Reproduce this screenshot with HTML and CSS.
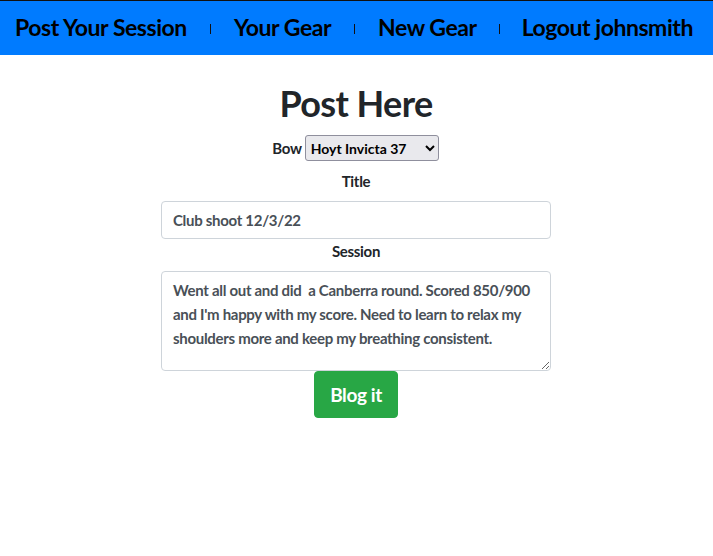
FILE: index.html
```html
<!DOCTYPE html>
<html>
<head>
<meta charset="utf-8">
<link rel="stylesheet" href="styles.css">
</head>
<body>
<nav class="navbar">
  <a class="nav-link" href="#">Post Your Session</a>
  <span class="sep"></span>
  <a class="nav-link" href="#">Your Gear</a>
  <span class="sep"></span>
  <a class="nav-link" href="#">New Gear</a>
  <span class="sep"></span>
  <a class="nav-link" href="#">Logout johnsmith</a>
</nav>
<main class="main">
  <h1 class="title">Post Here</h1>
  <form class="form">
    <div class="bow-row">
      <label class="label">Bow</label>
      <select class="select"><option>Hoyt Invicta 37</option></select>
    </div>
    <label class="label block first">Title</label>
    <input class="control input" type="text" value="Club shoot 12/3/22">
    <label class="label block">Session</label>
    <textarea class="control textarea">Went all out and did  a Canberra round. Scored 850/900 and I'm happy with my score. Need to learn to relax my shoulders more and keep my breathing consistent.</textarea>
    <button class="btn" type="button">Blog it</button>
  </form>
</main>
</body>
</html>
```

FILE: styles.css
```css
* { box-sizing: border-box; }
body {
  margin: 0;
  font-family: Lato, "Liberation Sans", sans-serif;
  font-weight: 700;
  color: #212529;
  background: #fff;
}
.navbar {
  display: flex;
  align-items: center;
  height: 55px;
  background: #007bff;
  border-top: 1px solid #111;
  padding: 0 0 2px 15px;
  white-space: nowrap;
  overflow: hidden;
}
.nav-link {
  flex-shrink: 0;
  color: #000;
  text-decoration: none;
  font-size: 23px;
  letter-spacing: -0.45px;
}
.sep {
  flex-shrink: 0;
  width: 1px;
  height: 10px;
  background: #111;
  margin: 4px 23px 0;
}
.sep:last-of-type { margin-left: 22px; margin-right: 22px; }
.main {
  display: flex;
  flex-direction: column;
  align-items: center;
  padding-right: 1px;
}
.title {
  margin: 26px 0 10px;
  font-size: 36px;
  line-height: 44px;
  letter-spacing: -0.6px;
}
.form {
  width: 390px;
  display: flex;
  flex-direction: column;
  align-items: center;
}
.bow-row {
  display: flex;
  align-items: center;
  gap: 3px;
  margin-left: -1px;
}
.label {
  font-size: 15px;
  line-height: 24px;
  letter-spacing: -0.3px;
}
.block { margin: 0 0 8px; }
.block.first { margin-top: 8px; }
.select {
  font-family: inherit;
  font-weight: 700;
  font-size: 14px;
  height: 26px;
  width: 134px;
  color: #000;
  background: #e9e9ed;
  border: 1px solid #8f8f9d;
  border-radius: 3px;
  padding: 2px 2px 2px 1px;
}
.control {
  width: 100%;
  font-family: inherit;
  font-weight: 700;
  font-size: 15px;
  color: #495057;
  border: 1px solid #ced4da;
  border-radius: 4px;
  padding: 6px 11px;
  letter-spacing: -0.3px;
  margin: 0;
}
.input { height: 38px; }
.textarea {
  display: block;
  height: 100px;
  line-height: 24px;
  resize: vertical;
}
.btn {
  width: 84px;
  height: 47px;
  font-family: inherit;
  font-weight: 700;
  font-size: 19px;
  color: #fff;
  background: #28a745;
  border: 1px solid #28a745;
  border-radius: 4px;
  letter-spacing: -0.4px;
}
```
